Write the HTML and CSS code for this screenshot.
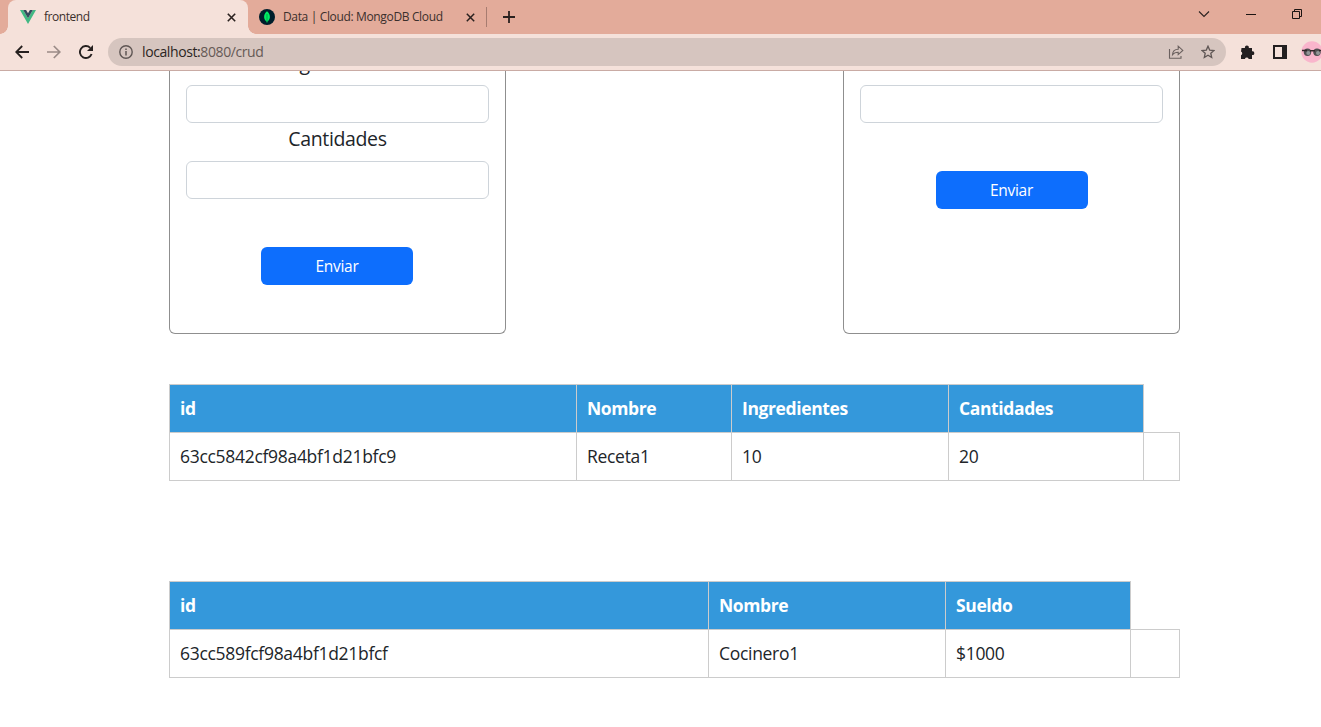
FILE: index.html
```html
<!DOCTYPE html>
<html lang="es">
<head>
<meta charset="utf-8">
<title>frontend</title>
<link rel="stylesheet" href="styles.css">
</head>
<body>
<header class="browser">
  <div class="tabs">
    <div class="tab tab-active">
      <svg class="favicon" width="16" height="16" viewBox="0 0 16 16"><path fill="#41b883" d="M0 1h3.200L8 9.300 12.800 1H16L8 15z"/><path fill="#35495e" d="M3.200 1H6.100L8 4.300 9.900 1h2.900L8 9.300z"/></svg>
      <span class="tab-title t-one">frontend</span>
      <svg class="close" width="9" height="9" viewBox="0 0 9 9"><path d="M.8.8l7.400 7.400M8.200.8L.8 8.200" stroke="#2a211f" stroke-width="1.600"/></svg>
    </div>
    <div class="tab tab-idle">
      <svg class="favicon" width="16" height="16" viewBox="0 0 16 16"><circle cx="8" cy="8" r="8" fill="#001e2b"/><path fill="#00ed64" d="M8 2.300C10 4 11 6 10.900 8.300c-.1 1.900-1.100 3.200-2.500 4.200V13.600h-.8V12.500C6.200 11.500 5.200 10.200 5.100 8.300 5 6 6 4 8 2.300z"/><path d="M8 5v7.500" stroke="#00a348" stroke-width=".9"/></svg>
      <span class="tab-title t-two">Data | Cloud: MongoDB Cloud</span>
      <svg class="close" width="9" height="9" viewBox="0 0 9 9"><path d="M.8.8l7.400 7.400M8.200.8L.8 8.200" stroke="#2a211f" stroke-width="1.500"/></svg>
    </div>
    <div class="divider"></div>
    <svg class="plus" width="12" height="12" viewBox="0 0 12 12"><path d="M6 0v12M0 6h12" stroke="#2a211f" stroke-width="1.800"/></svg>
    <div class="window-buttons">
      <svg width="12" height="28" viewBox="0 0 12 28"><path d="M1 11.500l5 5 5-5" fill="none" stroke="#2a211f" stroke-width="1.100"/></svg>
      <svg width="10" height="28" viewBox="0 0 10 28"><path d="M0 14.500h10" stroke="#1c1412"/></svg>
      <svg width="10" height="28" viewBox="0 0 10 28"><path d="M.5 11.500h7v7h-7zM2.500 11.500v-2h7v7h-2" fill="none" stroke="#1c1412"/></svg>
    </div>
  </div>
  <div class="toolbar">
    <svg class="nav" width="14" height="14" viewBox="0 0 14 14"><path d="M14 7H1.500M7.200 1L1.200 7l6 6" fill="none" stroke="#26201f" stroke-width="1.800"/></svg>
    <svg class="nav" width="14" height="14" viewBox="0 0 14 14"><path d="M0 7h12.500M6.800 1l6 6-6 6" fill="none" stroke="#9a8b87" stroke-width="1.700"/></svg>
    <svg class="nav reload" width="14" height="14" viewBox="0 0 14 14"><path d="M12.600 9A6 6 0 1 1 11.200 2.800" fill="none" stroke="#26201f" stroke-width="1.900"/><path d="M14 0v6H8z" fill="#26201f"/></svg>
    <div class="address">
      <svg width="14" height="14" viewBox="0 0 14 14"><circle cx="7" cy="7" r="6.200" fill="none" stroke="#5f5654" stroke-width="1.400"/><path d="M7 6v4.500M7 3.500V5" stroke="#5f5654" stroke-width="1.500"/></svg>
      <span class="url">localhost:<span class="path">8080/crud</span></span>
      <svg class="share" width="16" height="14" viewBox="0 0 16 14"><path d="M1.500 4v9.300h11.500V11M4.500 9.700C4.700 6.200 6.500 4.200 10.200 4.200V1.200l4.600 4.200-4.600 4.200V7.200C7.500 7.200 5.700 8 4.500 9.700z" fill="none" stroke="#6b615f" stroke-width="1.100"/></svg>
      <svg width="14" height="14" viewBox="0 0 14 14"><path d="M7 1.200l1.700 3.900 4.300.4-3.200 2.800.9 4.200L7 10.300l-3.700 2.200.9-4.200L1 5.500l4.300-.4z" fill="none" stroke="#5f5654" stroke-width="1.300"/></svg>
    </div>
    <svg class="puzzle" width="15" height="15" viewBox="0 0 15 15"><path fill="#231f20" d="M1.500 3H5a2 2 0 1 1 3.800 0H12V6.300a1.900 1.900 0 1 1 0 3.700v4H8.700a2 2 0 0 0-3.800 0H1v-3.800a2 2 0 0 0 0-3.700z"/></svg>
    <svg class="panel" width="14" height="14" viewBox="0 0 14 14"><path d="M1 1h12v12H1z" fill="none" stroke="#231f20" stroke-width="2"/><path d="M9 1h4v12H9z" fill="#231f20"/></svg>
    <svg class="avatar" width="20" height="22" viewBox="0 0 20 22"><circle cx="11" cy="11" r="10.700" fill="#f9b5cc"/><circle cx="6.500" cy="11.300" r="3.700" fill="#514f52"/><circle cx="16" cy="11.300" r="3.700" fill="#514f52"/><circle cx="7.300" cy="12" r="2" fill="#929698"/><circle cx="17" cy="12" r="2" fill="#929698"/><path d="M1 9.500h5M9 9.800h5M18 9.500h2" stroke="#302528" stroke-width="1.500"/></svg>
  </div>
</header>
<main class="page">
  <section class="forms">
    <form class="card card-recipe">
      <label class="label">Ingredientes</label>
      <input class="field" type="text">
      <label class="label">Cantidades</label>
      <input class="field" type="text">
      <button class="submit" type="button">Enviar</button>
    </form>
    <form class="card card-cook">
      <input class="field" type="text">
      <button class="submit" type="button">Enviar</button>
    </form>
  </section>
  <table class="records recipes">
    <colgroup><col class="r-id"><col class="r-name"><col class="r-ingr"><col class="r-qty"><col></colgroup>
    <thead><tr><th>id</th><th>Nombre</th><th>Ingredientes</th><th>Cantidades</th></tr></thead>
    <tbody><tr><td>63cc5842cf98a4bf1d21bfc9</td><td>Receta1</td><td>10</td><td>20</td><td></td></tr></tbody>
  </table>
  <table class="records cooks">
    <colgroup><col class="c-id"><col class="c-name"><col class="c-pay"><col></colgroup>
    <thead><tr><th>id</th><th>Nombre</th><th>Sueldo</th></tr></thead>
    <tbody><tr><td>63cc589fcf98a4bf1d21bfcf</td><td>Cocinero1</td><td>$1000</td><td></td></tr></tbody>
  </table>
</main>
</body>
</html>
```
FILE: styles.css
```css
* { box-sizing: border-box; }
body {
  margin: 0;
  height: 727px;
  overflow: hidden;
  display: flex;
  flex-direction: column;
  background: #fff;
  color: #212529;
  font-family: "Open Sans", "Noto Sans", sans-serif;
}
svg { display: block; flex: none; }

.browser { flex: none; height: 71px; border-bottom: 1px solid #c9aba4; background: #f5e1da; }
.tabs { display: flex; height: 34px; background: #e3ab9a; padding-left: 8px; }
.tab { display: flex; align-items: center; height: 34px; font-size: 12px; white-space: nowrap; }
.tab-active {
  position: relative;
  width: 240px;
  padding: 0 12px;
  background: #f5e1da;
  border-radius: 8px 8px 0 0;
}
.tab-active::before, .tab-active::after {
  content: "";
  position: absolute;
  bottom: 0;
  width: 8px;
  height: 8px;
}
.tab-active::before { left: -8px; background: radial-gradient(circle at 0 0, transparent 7.5px, #f5e1da 8px); }
.tab-active::after { right: -8px; background: radial-gradient(circle at 100% 0, transparent 7.5px, #f5e1da 8px); }
.tab-idle { width: 238px; padding: 0 11px; }
.tab-title { margin-left: 8px; padding-bottom: 1px; color: #3b2f2c; }
.t-one { letter-spacing: -0.45px; }
.t-two { letter-spacing: -0.35px; }
.close { margin-left: auto; }
.divider { width: 1px; height: 20px; margin: 7px 16px 0 0; background: #a77c70; }
.plus { margin-top: 11px; }
.window-buttons { display: flex; gap: 36px; margin: 0 19px 0 auto; }

.toolbar { display: flex; align-items: center; height: 36px; padding-left: 15px; }
.nav { margin-right: 18px; }
.reload { margin-right: 15px; }
.address {
  display: flex;
  align-items: center;
  width: 1118px;
  height: 28px;
  padding: 0 11px;
  border-radius: 14px;
  background: #d6c5bf;
}
.url { margin-left: 9px; padding-bottom: 1px; font-size: 14px; letter-spacing: -0.4px; color: #2b2523; }
.path { color: #665a56; }
.share { margin: 0 17px 0 auto; }
.puzzle { margin-left: 14px; }
.panel { margin-left: 18px; }
.avatar { margin-left: auto; }

.page { flex: 1; width: 1011px; margin-left: 169px; overflow: hidden; }
.forms { display: flex; justify-content: space-between; height: 263px; }
.card {
  display: flex;
  flex-direction: column;
  align-items: center;
  width: 337px;
  padding: 0 16px;
  border: 1px solid #8f8f8f;
  border-top: 0;
  border-radius: 0 0 6px 6px;
}
.card-cook { padding-top: 14px; }
.label { flex: none; height: 38px; font-size: 19.5px; line-height: 32px; letter-spacing: -0.36px; }
.label:first-child { margin-top: -24px; }
.field { flex: none; width: 100%; height: 38px; border: 1px solid #ced4da; border-radius: 6px; background: #fff; }
.submit {
  flex: none;
  width: 152px;
  height: 38px;
  margin-top: 48px;
  border: 0;
  border-radius: 6px;
  background: #0d6efd;
  color: #fff;
  font: 15.5px/24px "Open Sans", "Noto Sans", sans-serif;
  letter-spacing: -0.3px;
}
.card-recipe .submit { margin-right: 1px; }

.records { width: 1011px; table-layout: fixed; border-collapse: collapse; font-size: 17.5px; letter-spacing: -0.3px; line-height: 27px; }
.records th, .records td { height: 48px; padding: 0 10px; border: 1px solid #ccc; text-align: left; }
.records th { background: #3498db; color: #fff; font-weight: 700; letter-spacing: -0.38px; }
.recipes { margin-top: 50px; }
.cooks { margin-top: 100px; }
.r-id { width: 407px; }
.r-name { width: 155px; }
.r-ingr { width: 217px; }
.r-qty { width: 195px; }
.c-id { width: 539px; }
.c-name { width: 237px; }
.c-pay { width: 185px; }
```
